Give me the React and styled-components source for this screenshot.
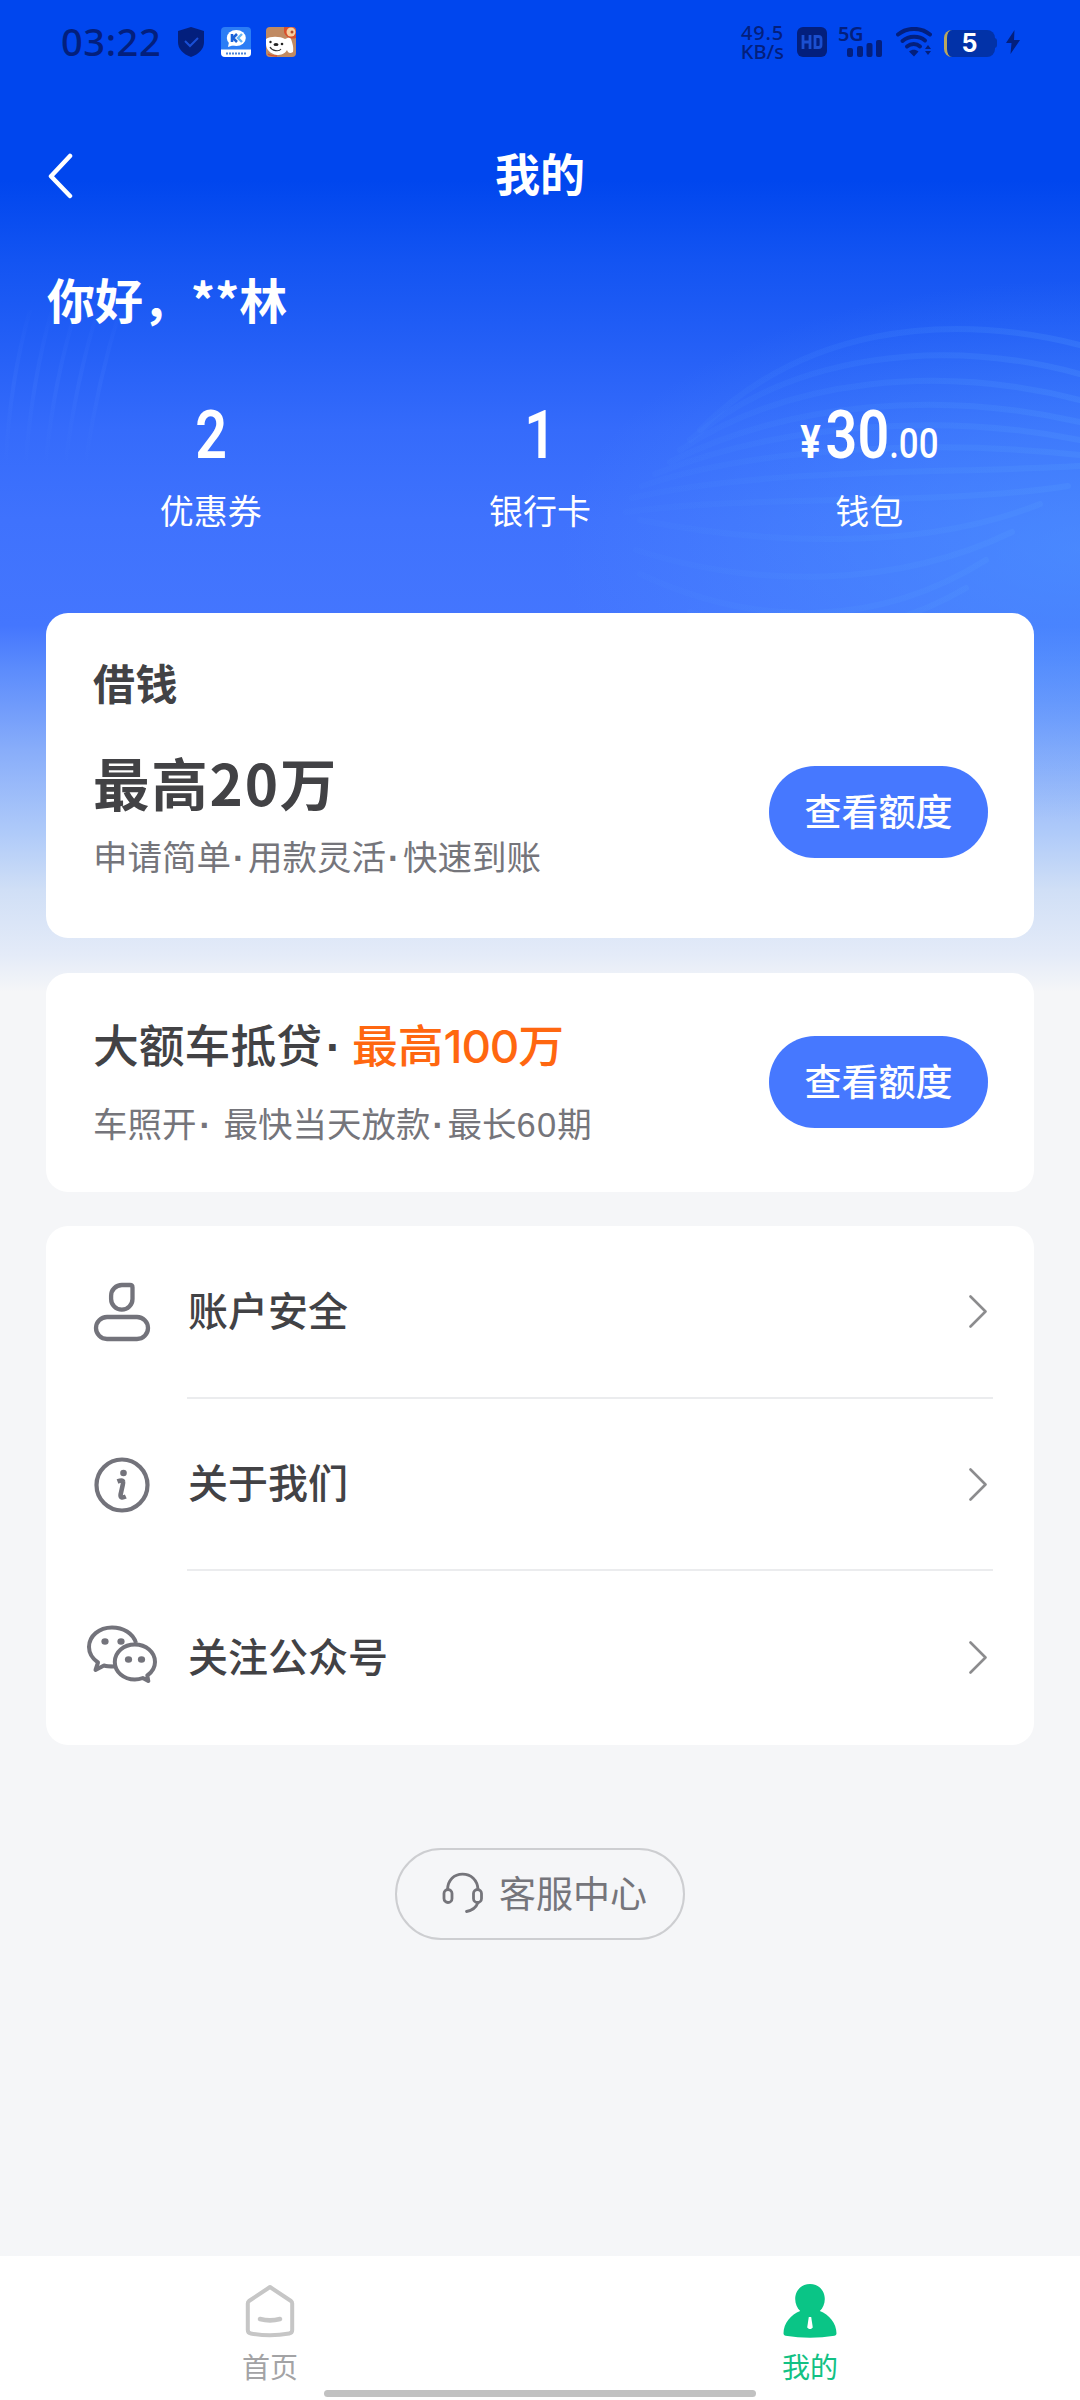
import React from 'react'
import styled, { createGlobalStyle } from 'styled-components'

const GlobalStyle = createGlobalStyle`
  * {
    box-sizing: border-box;
  }

  body {
    margin: 0;
    background: #f5f6f8;
    font-family: 'Noto Sans CJK SC', sans-serif;
  }
`

const Page = styled.div`
  background: #f5f6f8;
  display: flex;
  flex-direction: column;
  height: 2400px;
  position: relative;
  width: 1080px;
`

const Backdrop = styled.div`
  background: linear-gradient(
    180deg,
    #0046ee 0,
    #0046ee 180px,
    #1354f2 260px,
    #245ff6 345px,
    #356bfb 430px,
    #3f72fd 520px,
    #4476fe 625px,
    #5c8cfc 670px,
    #88adfa 750px,
    #b0cbf9 835px,
    #d0dff6 890px,
    #e4ebf8 955px,
    #f5f6f8 992px
  );
  height: 992px;
  left: 0;
  position: absolute;
  top: 0;
  width: 100%;

  svg {
    display: block;
  }
`

const StatusBar = styled.div`
  align-items: center;
  display: flex;
  height: 84px;
  justify-content: space-between;
  padding: 0 60px 0 61px;
  position: relative;

  svg {
    display: block;
  }
`

const StatusLeft = styled.div`
  align-items: center;
  display: flex;
`

const Clock = styled.span`
  color: #031f7d;
  font-family: 'Noto Sans', sans-serif;
  font-size: 38px;
  font-weight: 500;
  letter-spacing: 0.6px;
  line-height: 80px;
  margin: -2px 16px 0 0;
  width: 101px;
`

const StatusRight = styled(StatusLeft)`
  color: #031f7d;
`

const Speed = styled.div`
  font-family: 'Noto Sans', sans-serif;
  font-size: 20px;
  font-weight: 500;
  line-height: 19px;
  margin-right: 13px;
  text-align: right;
  white-space: nowrap;
  width: 54px;
`

const SpeedValue = styled.div`
  letter-spacing: 0.8px;
`

const Battery = styled.div`
  align-items: center;
  background: #0232a8;
  border-left: 3px solid #b9a85f;
  border-radius: 8px;
  color: #fff;
  display: flex;
  font-family: Inter, sans-serif;
  font-size: 25px;
  font-weight: 700;
  height: 27px;
  justify-content: center;
  line-height: 27px;
  margin: 3px 11px 0 12px;
  padding-right: 3px;
  position: relative;
  width: 51px;

  &::after {
    background: #0232a8;
    border-radius: 0 3px 3px 0;
    content: '';
    height: 10px;
    position: absolute;
    right: -2px;
    top: 8px;
    width: 3px;
  }
`

const NavBar = styled.div`
  align-items: center;
  display: grid;
  grid-template-columns: 46px 1fr 46px;
  height: 92px;
  margin-top: 46px;
  padding: 0 46px;
  position: relative;
`

const NavTitle = styled.h1`
  color: #fff;
  font-size: 45px;
  font-weight: 700;
  line-height: 92px;
  margin: 0;
  margin-top: -7px;
  text-align: center;
`

const Greeting = styled.div`
  color: #fff;
  font-size: 48px;
  font-weight: 700;
  height: 80px;
  letter-spacing: -0.1px;
  line-height: 78px;
  margin-top: 37px;
  padding-left: 47px;
  position: relative;
`

const Stats = styled.div`
  display: grid;
  grid-template-columns: repeat(3, 1fr);
  height: 274px;
  padding: 56px 46px 0;
  position: relative;
`

const Stat = styled.div`
  align-items: center;
  color: #fff;
  display: flex;
  flex-direction: column;
`

const Amount = styled.div`
  align-items: baseline;
  display: flex;
  font-family: Roboto, sans-serif;
  font-size: 67px;
  font-weight: 600;
  height: 80px;
  line-height: 80px;
  transform: scaleX(0.83);
`

const Currency = styled.span`
  font-size: 46px;
  font-weight: 700;
  margin-right: 6px;
`

const Cents = styled.span`
  font-size: 42px;
  font-weight: 500;
`

const StatLabel = styled.div`
  font-size: 34px;
  line-height: 48px;
  margin-top: 11px;
`

const Card = styled.section`
  background: #fff;
  border-radius: 22px;
  height: ${({ height }) => height}px;
  margin: 0 46px ${({ gap }) => gap}px;
  padding: 0 46px 0 47px;
  position: relative;
`

const Offer = styled(Card)`
  align-items: flex-start;
  display: flex;
  justify-content: space-between;
`

const OfferTitle = styled.h2`
  color: #424245;
  font-size: ${({ size }) => size}px;
  font-weight: ${({ weight }) => weight || 700};
  letter-spacing: ${({ spacing }) => spacing || 0}px;
  line-height: 64px;
  margin: ${({ top }) => top}px 0 0;
  white-space: nowrap;
`

const OfferText = styled.p`
  color: #75757b;
  font-size: 34.5px;
  line-height: 48px;
  margin: ${({ top }) => top}px 0 0;
  white-space: nowrap;
`

const Dot = styled.span`
  display: inline-block;
  font-family: 'Liberation Sans', sans-serif;
  font-weight: 700;
  padding-left: ${({ shift }) => shift || 2}px;
  width: ${({ width }) => width || 17}px;
`

const Highlight = styled.span`
  color: #ff6710;
`

const Num = styled.span`
  font-family: ${({ family }) => family || 'Liberation Sans'}, sans-serif;
  letter-spacing: ${({ spacing }) => spacing || 0}px;
`

const OfferButton = styled.button`
  background: #4678ff;
  border: 0;
  border-radius: 46px;
  color: #fff;
  font-family: inherit;
  font-size: 37px;
  font-weight: 500;
  height: 92px;
  line-height: 88px;
  margin-top: ${({ top }) => top}px;
  padding: 0 0 5px;
  width: 219px;
`

const Row = styled.div`
  align-items: center;
  display: flex;
  height: 172.5px;
`

const RowIcon = styled.div`
  display: flex;
  justify-content: center;
  margin-left: -8px;
  width: 74px;
`

const RowBody = styled.div`
  align-items: center;
  border-bottom: ${({ last }) => (last ? 0 : '2px solid #ebecee')};
  color: #424245;
  display: flex;
  font-size: 40px;
  font-weight: 500;
  height: 100%;
  justify-content: space-between;
  margin: 0 -5px 0 28px;
  padding: 0 6px 0 1px;
  flex: 1;

  span {
    margin-top: -5px;
  }
`

const ServiceButton = styled.button`
  align-items: center;
  align-self: center;
  background: transparent;
  border: 2px solid #cdced1;
  border-radius: 46px;
  color: #75757b;
  display: flex;
  font-family: inherit;
  font-size: 37px;
  gap: 15px;
  height: 92px;
  line-height: 50px;
  margin-top: 103px;
  padding: 0 0 4px 45px;
  width: 290px;

  svg {
    margin-top: 2px;
  }
`

const TabBar = styled.nav`
  background: #fff;
  display: grid;
  grid-template-columns: 1fr 1fr;
  height: 144px;
  margin-top: auto;
  padding-top: 28px;
  position: relative;
`

const Tab = styled.div`
  align-items: center;
  color: ${({ active }) => (active ? '#12c184' : '#a3a3a5')};
  display: flex;
  flex-direction: column;
  font-size: 28px;
  line-height: 40px;

  svg {
    display: block;
    margin-bottom: 8px;
  }
`

const HomeIndicator = styled.div`
  background: #c1c1c1;
  border-radius: 4px;
  bottom: 3px;
  height: 7px;
  left: 324px;
  position: absolute;
  width: 432px;
`

const Waves = () => (
  <svg width="1080" height="992" fill="none">
    <defs>
      <linearGradient id="fade" x1="620" x2="1080" y1="0" y2="0" gradientUnits="userSpaceOnUse">
        <stop offset="0" stopColor="#58a0ff" stopOpacity="0.03" />
        <stop offset="1" stopColor="#58a0ff" stopOpacity="0.2" />
      </linearGradient>
      <radialGradient id="glow" cx="0" cy="0" r="1" gradientUnits="userSpaceOnUse" gradientTransform="translate(1080 550) scale(520 270)">
        <stop offset="0" stopColor="#4f96ff" stopOpacity="0.6" />
        <stop offset="1" stopColor="#4f96ff" stopOpacity="0" />
      </radialGradient>
      <linearGradient id="left" x1="0" x2="0" y1="300" y2="470" gradientUnits="userSpaceOnUse">
        <stop offset="0" stopColor="#4a80ff" stopOpacity="0" />
        <stop offset="0.5" stopColor="#4a80ff" stopOpacity="0.2" />
        <stop offset="1" stopColor="#4a80ff" stopOpacity="0" />
      </linearGradient>
    </defs>
    <path d="M540 270H1080V840H540z" fill="url(#glow)" />
    <g stroke="url(#fade)" strokeWidth="6" strokeLinecap="round">
      <path d="M700 430C800 330 940 310 1080 345" />
      <path d="M690 440C790 355 940 336 1080 374" />
      <path d="M680 450C790 378 940 364 1080 400" />
      <path d="M670 462C790 402 940 390 1080 422" />
      <path d="M655 474C780 424 940 412 1080 440" />
      <path d="M642 486C760 446 940 440 1080 455" />
      <path d="M632 498C760 468 940 474 1080 466" />
      <path d="M626 512C760 494 940 506 1068 486" />
      <path d="M640 520C760 544 920 552 1040 504" />
      <path d="M636 550C760 590 900 586 1012 532" />
      <path d="M640 574C760 630 880 626 986 560" />
      <path d="M690 612C760 636 860 650 966 588" />
    </g>
    <g stroke="url(#left)" strokeWidth="4">
      <path d="M6 460Q10 380 30 310" />
      <path d="M26 460Q32 380 52 310" />
      <path d="M46 460Q54 380 76 310" />
      <path d="M66 460Q76 380 98 310" />
      <path d="M86 460Q98 380 120 310" />
    </g>
  </svg>
)

const Shield = () => (
  <svg width="26" height="30" viewBox="0 0 26 30">
    <path d="M13 0l13 4v11c0 7-5 12-13 15C5 27 0 22 0 15V4z" fill="#031f7d" />
    <path d="M7 14l5 5 8-8" stroke="#1a4fd6" strokeWidth="2" fill="none" />
  </svg>
)

const AppBadge = styled.svg`
  margin-left: ${({ $gap }) => $gap}px;
`

const ChatApp = () => (
  <AppBadge $gap={17} width="30" height="30" viewBox="0 0 30 30">
    <rect width="30" height="30" rx="4" fill="#2b7df5" />
    <path d="M0 22.500h30v3.500a4 4 0 0 1-4 4H4a4 4 0 0 1-4-4z" fill="#fff" />
    <ellipse cx="15.300" cy="11" rx="9.500" ry="8" fill="#fff" />
    <path d="M8 15l-1 5 6-2z" fill="#fff" />
    <path d="M11 7v8M16 7l-4 4 4 4" stroke="#1a62d8" strokeWidth="2.600" fill="none" />
    <path d="M21 7l-4 4 4 4" stroke="#65b4f5" strokeWidth="2.400" fill="none" />
    <path d="M5 26.500h20" stroke="#4c86d8" strokeWidth="2" strokeDasharray="2 1" />
  </AppBadge>
)

const DogApp = () => (
  <AppBadge $gap={15} width="30" height="30" viewBox="0 0 30 30">
    <rect width="30" height="30" rx="4" fill="#c08a62" />
    <path d="M0 12c4-3 14-3 19 0l5-2c2 4 4 10 3 15-3 2-5 1-6-2-2 4-6 5-10 5C4 27 0 22 0 17z" fill="#fff" />
    <path d="M18 0h8a4 4 0 0 1 4 4v7c-6 2-11-2-12-6z" fill="#d8502c" />
    <circle cx="25" cy="5" r="4.500" fill="#f7cfa0" />
    <circle cx="26" cy="5" r="1.500" fill="#b44a28" />
    <ellipse cx="10" cy="17.500" rx="2.500" ry="1.600" fill="#222" />
    <circle cx="4.500" cy="15" r="1.200" fill="#222" />
    <circle cx="16" cy="17" r="1.300" fill="#222" />
    <path d="M4 20c2 4 9 5 11 2" stroke="#333" strokeWidth="1.200" fill="none" />
    <path d="M2 27c3 2 7 2 9 2" stroke="#d8502c" strokeWidth="1.400" fill="none" />
  </AppBadge>
)

const HdIcon = () => (
  <svg width="30" height="30" viewBox="0 0 30 30">
    <rect width="30" height="30" rx="6" fill="#031f7d" />
    <path d="M6 8v14M13 8v14M6 15h7M18 9.500v11h3.500a2.500 2.500 0 0 0 2.500-2.500v-6a2.500 2.500 0 0 0-2.500-2.500z" stroke="#1b4fd0" strokeWidth="2.800" fill="none" />
  </svg>
)

const Signal = styled.div`
  display: flex;
  flex-direction: column;
  height: 32px;
  margin-left: 11px;
  width: 45px;

  span {
    font: 600 20px/16px 'Noto Sans', sans-serif;
    letter-spacing: -0.5px;
  }

  svg {
    margin: -2px 0 0 9px;
  }
`

const Wifi = styled.svg`
  margin-left: 13px;
`

const WifiIcon = () => (
  <Wifi width="36" height="30" viewBox="0 0 36 30">
    <g stroke="#031f7d" strokeWidth="4" fill="none" strokeLinecap="round">
      <path d="M2 7.500C11 0 25 0 34 7.500" />
      <path d="M6.500 14C13 8.500 23 8.500 29 13.500" />
      <path d="M11 19.500c4-3.200 9.500-3.200 13 0" />
    </g>
    <path d="M13 24.500c3-2.500 6.500-2.500 9.500 0L18 29.500zM29 22l3-4 3 4zM29 24l3 4 3-4z" fill="#031f7d" />
  </Wifi>
)

const Bolt = () => (
  <svg width="14" height="24" viewBox="0 0 14 24">
    <path d="M8.500 0L0 13h5.500l-1 11L14 10H8z" fill="#031f7d" />
  </svg>
)

const BackIcon = () => (
  <svg width="28" height="46" viewBox="0 0 28 46">
    <path d="M24 3L5 23.200L24 43" stroke="#fff" strokeWidth="4.500" fill="none" strokeLinecap="round" strokeLinejoin="round" />
  </svg>
)

const Chevron = () => (
  <svg width="18" height="34" viewBox="0 0 18 34">
    <path d="M1.500 2.500L16.500 17.500L1.500 32.500" stroke="#8c8c8e" strokeWidth="2.600" fill="none" strokeLinecap="round" strokeLinejoin="round" />
  </svg>
)

const AccountIcon = () => (
  <svg width="58" height="60" viewBox="0 0 58 60" fill="none" stroke="#73737b" strokeWidth="4.300">
    <path d="M29 3h8q2.500 0 2.500 2.500V17a10.700 10.700 0 0 1-21.400 0v-3.200A10.800 10.800 0 0 1 29 3z" />
    <rect x="3" y="35" width="52" height="22" rx="11" />
  </svg>
)

const InfoIcon = () => (
  <svg width="58" height="58" viewBox="0 0 58 58" fill="none" stroke="#73737b">
    <circle cx="29" cy="29" r="25.500" strokeWidth="4.200" />
    <circle cx="30.500" cy="17" r="3.300" fill="#73737b" stroke="none" />
    <path d="M24.500 25.500q5-2 5.500 0q.3 1-.4 4l-2 9q-.6 4.500 5.200 2" strokeWidth="4.600" strokeLinejoin="round" />
  </svg>
)

const WechatIcon = () => (
  <svg width="72" height="66" viewBox="0 0 72 66" fill="none" stroke="#73737b" strokeWidth="4" strokeLinejoin="round">
    <path d="M50 19C47 9 37 3.500 26 3.500C13 3.500 3 12 3 23c0 7 4 12 9 15.500L9.500 46l8.500-4.500c3 1 6 1 10.500 1" />
    <ellipse cx="19" cy="17.500" rx="3.600" ry="3.200" fill="#73737b" stroke="none" />
    <ellipse cx="35" cy="17.500" rx="3.600" ry="3.200" fill="#73737b" stroke="none" />
    <path d="M48.800 20.500c-11 0-20 7.500-20 17.500s9 17.500 20 17.500c3 0 5.600-.6 8-1.500l5.500 3l-1-5.500c5-3.500 7.700-8 7.700-13.500c0-10-9-17.500-20.200-17.500z" />
    <ellipse cx="42.500" cy="35.500" rx="3.600" ry="3.200" fill="#73737b" stroke="none" />
    <ellipse cx="55.500" cy="35.500" rx="3.600" ry="3.200" fill="#73737b" stroke="none" />
  </svg>
)

const HeadsetIcon = () => (
  <svg width="42" height="42" viewBox="0 0 42 42" fill="none" stroke="#75757b" strokeWidth="2.800" strokeLinecap="round">
    <rect x="2" y="17.500" width="8" height="13" rx="4" />
    <rect x="31.500" y="17.500" width="8" height="13" rx="4" />
    <path d="M5.500 17.500C6 8 12 2.200 20.500 2.200S35.500 8 36 17.500M36 30.500C34 36 30 38.500 24.500 39.500" />
  </svg>
)

const HomeIcon = () => (
  <svg width="50" height="54" viewBox="0 0 50 54" fill="none" stroke="#c6c6c6" strokeWidth="4" strokeLinejoin="round" strokeLinecap="round">
    <path d="M25 3L46 17q1.200 1 1.200 2.500V46q0 3-3 3.500Q25 53 5.800 49.500q-3-.5-3-3.500V19.500Q2.800 18 4 17z" />
    <path d="M15 35q10 2.800 20 0" strokeWidth="4.600" />
  </svg>
)

const MeIcon = () => (
  <svg width="54" height="54" viewBox="0 0 54 54">
    <path d="M27 0c8.500 0 14.800 6.500 14.800 15c0 5-2 9.300-5 12C46 30.500 53.500 39 53.500 49.500q0 2-2 2.300Q27 55.500 2.500 51.800q-2-.3-2-2.300C.5 39 8 30.500 17.200 27c-3-2.700-5-7-5-12C12.200 6.500 18.500 0 27 0z" fill="#0ac586" />
    <path d="M25.800 33h2.400l1.600 10.500-1.800 1.500h-2l-1.800-1.500z" fill="#fff" />
  </svg>
)

const links = [
  { label: '账户安全', icon: <AccountIcon /> },
  { label: '关于我们', icon: <InfoIcon /> },
  { label: '关注公众号', icon: <WechatIcon /> },
]

const App = () => (
  <Page>
    <GlobalStyle />
    <Backdrop>
      <Waves />
    </Backdrop>

    <StatusBar>
      <StatusLeft>
        <Clock>03:22</Clock>
        <Shield />
        <ChatApp />
        <DogApp />
      </StatusLeft>
      <StatusRight>
        <Speed>
          <SpeedValue>49.5</SpeedValue>
          <div>KB/s</div>
        </Speed>
        <HdIcon />
        <Signal>
          <span>5G</span>
          <svg width="36" height="17" fill="#031f7d">
            <rect x="0" y="8" width="6" height="9" rx="2" />
            <rect x="10" y="6" width="6" height="11" rx="2" />
            <rect x="19.500" y="3" width="6" height="14" rx="2" />
            <rect x="29" y="0" width="6" height="17" rx="2" />
          </svg>
        </Signal>
        <WifiIcon />
        <Battery>5</Battery>
        <Bolt />
      </StatusRight>
    </StatusBar>

    <NavBar>
      <BackIcon />
      <NavTitle>我的</NavTitle>
    </NavBar>

    <Greeting>你好，**林</Greeting>

    <Stats>
      <Stat>
        <Amount>2</Amount>
        <StatLabel>优惠券</StatLabel>
      </Stat>
      <Stat>
        <Amount>1</Amount>
        <StatLabel>银行卡</StatLabel>
      </Stat>
      <Stat>
        <Amount>
          <Currency>¥</Currency>30<Cents>.00</Cents>
        </Amount>
        <StatLabel>钱包</StatLabel>
      </Stat>
    </Stats>

    <Offer height={325} gap={35}>
      <div>
        <OfferTitle size={42} top={37} spacing={0.5}>借钱</OfferTitle>
        <OfferTitle size={56.5} top={35} spacing={1.8}>最高20万</OfferTitle>
        <OfferText top={18}>
          申请简单<Dot>·</Dot>用款灵活<Dot>·</Dot>快速到账
        </OfferText>
      </div>
      <OfferButton top={153}>查看额度</OfferButton>
    </Offer>

    <Offer height={219} gap={34}>
      <div>
        <OfferTitle size={45.8} weight={500} top={38}>
          大额车抵贷<Dot width={30} shift={4}>·</Dot>
          <Highlight>
            最高<Num family="Inter" spacing={-1.2}>100</Num>万
          </Highlight>
        </OfferTitle>
        <OfferText top={18}>
          车照开<Dot width={27} shift={3}>·</Dot>最快当天放款<Dot>·</Dot>最长<Num spacing={1.2}>60</Num>期
        </OfferText>
      </div>
      <OfferButton top={63}>查看额度</OfferButton>
    </Offer>

    <Card height={519} gap={0}>
      {links.map((link, index) => (
        <Row key={link.label}>
          <RowIcon>{link.icon}</RowIcon>
          <RowBody last={index === links.length - 1}>
            <span>{link.label}</span>
            <Chevron />
          </RowBody>
        </Row>
      ))}
    </Card>

    <ServiceButton>
      <HeadsetIcon />
      客服中心
    </ServiceButton>

    <TabBar>
      <Tab>
        <HomeIcon />
        首页
      </Tab>
      <Tab active>
        <MeIcon />
        我的
      </Tab>
      <HomeIndicator />
    </TabBar>
  </Page>
)

export default App
